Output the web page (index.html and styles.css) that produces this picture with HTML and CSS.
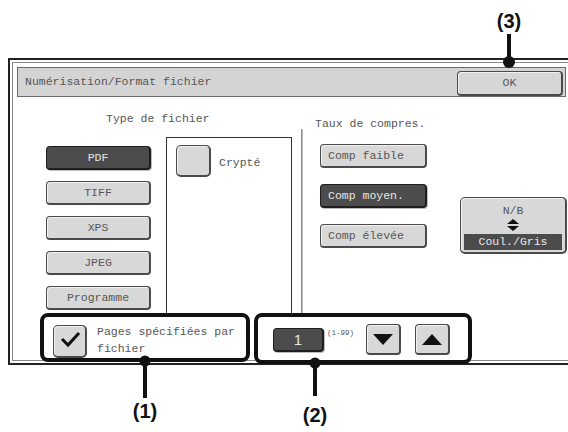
FILE: index.html
```html
<!DOCTYPE html>
<html lang="fr">
<head>
<meta charset="utf-8">
<title>Numérisation/Format fichier</title>
<link rel="stylesheet" href="styles.css">
</head>
<body>
<div class="page">
  <div class="panel">
    <div class="titlebar">
      <span class="title">Numérisation/Format fichier</span>
      <div class="btn ok">OK</div>
    </div>
    <div class="main">
      <div class="types">
        <div class="label type-label">Type de fichier</div>
        <div class="types-row">
          <div class="type-list">
            <div class="btn type on">PDF</div>
            <div class="btn type">TIFF</div>
            <div class="btn type">XPS</div>
            <div class="btn type">JPEG</div>
            <div class="btn type">Programme</div>
          </div>
          <div class="crypt-box">
            <div class="btn check-btn"></div>
            <span class="crypt-text">Crypté</span>
          </div>
        </div>
      </div>
      <div class="divider"></div>
      <div class="compress">
        <div class="label comp-label">Taux de compres.</div>
        <div class="comp-row">
          <div class="comp-list">
            <div class="btn comp">Comp faible</div>
            <div class="btn comp on">Comp moyen.</div>
            <div class="btn comp">Comp élevée</div>
          </div>
          <div class="btn color-btn">
            <span class="nb">N/B</span>
            <svg class="updown" width="12" height="12" viewBox="0 0 12 12"><path d="M6 0 L12 5 L0 5 Z M0 7 L12 7 L6 12 Z" fill="#111"/></svg>
            <span class="gris">Coul./Gris</span>
          </div>
        </div>
      </div>
    </div>
    <div class="footer">
      <div class="btn checkbox">
        <svg width="22" height="18" viewBox="0 0 22 18"><path d="M3 9 L9 15 L20 3" fill="none" stroke="#111" stroke-width="3"/></svg>
      </div>
      <div class="pages-text">Pages spécifiées par fichier</div>
      <div class="btn num on">1</div>
      <div class="range">(1-99)</div>
      <div class="btn arrow down">
        <svg width="20" height="11" viewBox="0 0 20 11"><path d="M0 0 L20 0 L10 11 Z" fill="#111"/></svg>
      </div>
      <div class="btn arrow up">
        <svg width="20" height="11" viewBox="0 0 20 11"><path d="M10 0 L20 11 L0 11 Z" fill="#111"/></svg>
      </div>
    </div>
  </div>

  <div class="anno-box box1"></div>
  <div class="anno-box box2"></div>
  <svg class="callouts" width="568" height="432" viewBox="0 0 568 432">
    <rect x="507" y="34" width="4" height="28" fill="#111"/>
    <circle cx="509" cy="62" r="6" fill="#111"/>
    <rect x="143" y="360" width="4" height="38" fill="#111"/>
    <circle cx="145" cy="361" r="5.5" fill="#111"/>
    <rect x="313" y="362" width="4" height="34" fill="#111"/>
    <circle cx="315" cy="363" r="5.5" fill="#111"/>
  </svg>
  <div class="anno-label l3">(3)</div>
  <div class="anno-label l1">(1)</div>
  <div class="anno-label l2">(2)</div>
</div>
</body>
</html>
```

FILE: styles.css
```css
html, body {
  margin: 0;
  padding: 0;
  background: #fff;
}
.page {
  position: relative;
  width: 568px;
  height: 432px;
  overflow: hidden;
  padding: 58px 0 0 8px;
  box-sizing: border-box;
  font-family: "Liberation Mono", "DejaVu Sans Mono", monospace;
  font-size: 11.5px;
  color: #565656;
}
.panel {
  box-sizing: border-box;
  width: 567px;
  height: 307px;
  border: 2px solid #222;
  box-shadow: inset 0 0 0 2px #fff, inset 0 0 0 3px #8a8a8a;
  display: flex;
  flex-direction: column;
  background: #fff;
}
.titlebar {
  box-sizing: border-box;
  margin: 7px 7px 0 7px;
  height: 30px;
  background: #d4d4d4;
  border: 1px solid #6a6a6a;
  display: flex;
  align-items: flex-end;
  justify-content: space-between;
  flex-shrink: 0;
}
.title {
  align-self: center;
  padding-left: 7px;
  line-height: 14px;
}
.btn {
  box-sizing: border-box;
  background: #d8d8d8;
  border: 1px solid #4a4a4a;
  border-right-width: 2px;
  border-bottom-width: 2px;
  border-radius: 4px;
  box-shadow: inset 1px 1px 0 #f2f2f2;
  display: flex;
  align-items: center;
  justify-content: center;
  line-height: 14px;
}
.btn.on {
  background: #4c4c4c;
  color: #e6e6e6;
  border-color: #1e1e1e;
  box-shadow: 1px 1px 0 #bdbdbd;
}
.ok {
  width: 106px;
  height: 25px;
  margin-right: 2px;
  background: #d6d6d6;
}
.main {
  height: 217px;
  display: flex;
  flex-shrink: 0;
}
.types {
  width: 287px;
  display: flex;
  flex-direction: column;
}
.label {
  line-height: 14px;
}
.type-label {
  margin-top: 15px;
  padding-left: 96px;
}
.types-row {
  margin-top: 11px;
  display: flex;
  flex: 1;
}
.type-list {
  margin-left: 36px;
  padding-top: 9px;
  width: 105px;
  display: flex;
  flex-direction: column;
  gap: 11px;
}
.type {
  height: 24px;
}
.crypt-box {
  box-sizing: border-box;
  margin-left: 15px;
  width: 126px;
  border: 1px solid #333;
  border-bottom: none;
  display: flex;
  align-items: flex-start;
}
.check-btn {
  width: 35px;
  height: 32px;
  margin: 7px 0 0 9px;
  border-radius: 5px;
}
.crypt-text {
  margin: 18px 0 0 8px;
}
.divider {
  width: 2px;
  margin-top: 32px;
  margin-left: 4px;
  background: #8c8c8c;
  box-shadow: inset -1px 0 0 #bcbcbc;
}
.compress {
  display: flex;
  flex-direction: column;
}
.comp-label {
  margin-top: 20px;
  padding-left: 12px;
}
.comp-row {
  display: flex;
  margin-top: 13px;
  margin-left: 17px;
  align-items: flex-start;
}
.comp-list {
  display: flex;
  flex-direction: column;
  gap: 16px;
}
.comp {
  width: 107px;
  height: 24px;
  justify-content: flex-start;
  padding-left: 7px;
}
.color-btn {
  width: 107px;
  height: 57px;
  margin-left: 33px;
  margin-top: 53px;
  flex-direction: column;
  justify-content: flex-start;
  border-radius: 5px;
  padding: 0 3px;
}
.nb {
  margin-top: 6px;
}
.updown {
  margin-top: 1px;
}
.gris {
  align-self: stretch;
  background: #4c4c4c;
  color: #e8e8e8;
  text-align: center;
  margin-top: 3px;
  height: 16px;
  line-height: 16px;
}
.footer {
  height: 49px;
  display: flex;
  align-items: flex-start;
  flex-shrink: 0;
}
.checkbox {
  width: 34px;
  height: 33px;
  margin: 11px 0 0 43px;
  border-radius: 5px;
  padding-bottom: 4px;
}
.pages-text {
  width: 145px;
  margin: 9px 0 0 10px;
  line-height: 17px;
}
.num {
  width: 51px;
  height: 24px;
  margin: 14px 0 0 31px;
  font-family: "Liberation Sans", Arial, sans-serif;
  font-size: 15px;
}
.range {
  font-size: 7.5px;
  line-height: 10px;
  margin: 14px 0 0 3px;
}
.arrow {
  width: 35px;
  height: 31px;
  margin-top: 10px;
  border-radius: 4px;
}
.down {
  margin-left: 12px;
}
.up {
  margin-left: 14px;
}
.anno-box {
  position: absolute;
  box-sizing: border-box;
  border: 4px solid #111;
  border-radius: 8px;
}
.box1 {
  left: 40px;
  top: 313px;
  width: 210px;
  height: 49px;
}
.box2 {
  left: 254px;
  top: 313px;
  width: 218px;
  height: 51px;
}
.callouts {
  position: absolute;
  left: 0;
  top: 0;
}
.anno-label {
  position: absolute;
  width: 40px;
  text-align: center;
  font-family: "Liberation Sans", Arial, sans-serif;
  font-weight: bold;
  font-size: 20px;
  line-height: 22px;
  color: #111;
}
.l3 { left: 489px; top: 10px; }
.l1 { left: 125px; top: 400px; }
.l2 { left: 295px; top: 404px; }
```
